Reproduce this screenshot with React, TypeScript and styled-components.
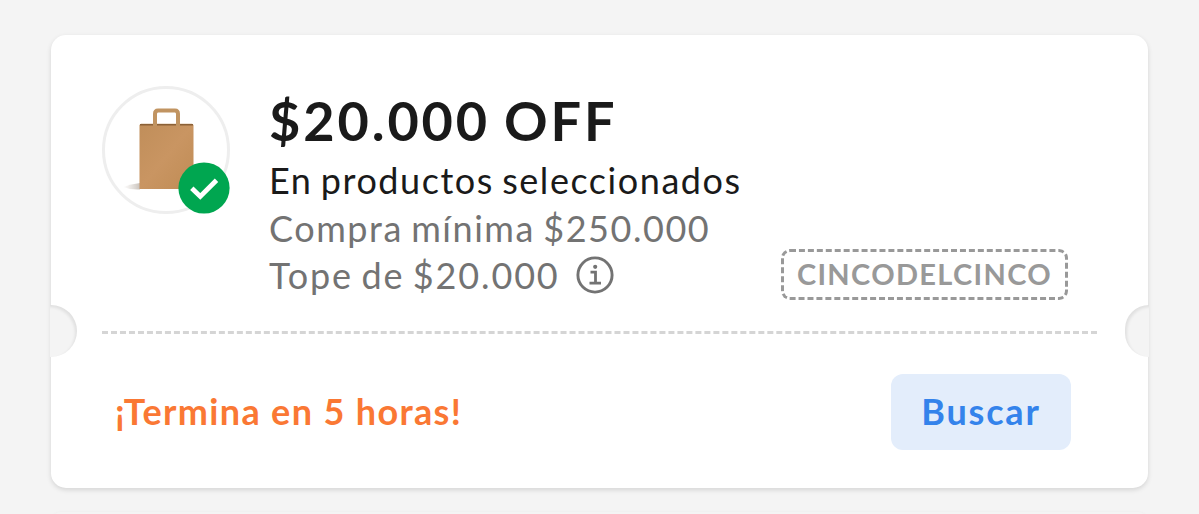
import styled, { createGlobalStyle } from 'styled-components'

const GlobalStyle = createGlobalStyle`
    body {
        margin: 0;
        background: #f4f4f4;
        font-family: Lato, 'Liberation Sans', sans-serif;
        overflow: hidden;
    }
`

const Page = styled.div`
    display: flex;
    flex-direction: column;
    gap: 24px;
    height: 514px;
    box-sizing: border-box;
    padding: 35px 51px 0;
    overflow: hidden;
`

const Card = styled.article`
    position: relative;
    display: flex;
    flex-direction: column;
    flex: none;
    height: 453px;
    border-radius: 15px;
    background: #fff;
    box-shadow: 0 2px 5px rgba(0, 0, 0, 0.13);
`

const NextCard = styled.div`
    flex: none;
    height: 20px;
    border-radius: 15px;
    box-shadow: 0 0 3px rgba(0, 0, 0, 0.04);
`

const Summary = styled.section`
    display: flex;
    height: 296px;
    box-sizing: border-box;
    padding: 51px 80px 0 51px;
`

const Picture = styled.div`
    position: relative;
    flex: none;
    width: 128px;
    height: 128px;
    margin-right: 39px;
    box-sizing: border-box;
    border: 3px solid #eee;
    border-radius: 50%;
`

const BagIcon = styled.svg`
    display: block;
    width: 122px;
    height: 122px;
`

const Badge = styled.svg`
    position: absolute;
    right: -3px;
    bottom: -3px;
    width: 52px;
    height: 52px;
`

const Details = styled.div`
    flex: 1;
    padding-top: 3px;
    white-space: nowrap;
`

const Title = styled.h1`
    margin: 0 0 4px;
    font-size: 54px;
    font-weight: 700;
    line-height: 64px;
    letter-spacing: 2.9px;
    word-spacing: -2px;
    color: #1a1a1a;
`

const Line = styled.p<{ $muted?: boolean, $spacing?: number }>`
    display: flex;
    align-items: center;
    margin: 0;
    font-size: 36px;
    line-height: 47.5px;
    letter-spacing: ${({ $spacing = 1.55 }) => $spacing}px;
    word-spacing: -2.5px;
    color: ${({ $muted }) => $muted ? '#737373' : '#1a1a1a'};
`

const InfoIcon = styled.svg`
    width: 38px;
    height: 38px;
    margin: 0 0 1px 16px;
`

const Code = styled.div`
    align-self: flex-end;
    flex: none;
    display: flex;
    align-items: center;
    justify-content: center;
    width: 287px;
    height: 51px;
    box-sizing: border-box;
    margin-bottom: 31px;
    padding-bottom: 2px;
    border: 3px dashed #999;
    border-radius: 9px;
    font-size: 29px;
    font-weight: 700;
    letter-spacing: 1.35px;
    color: #999;
`

const Divider = styled.div`
    margin: 0 51px;
    border-top: 3px dashed #d5d5d5;
`

const Notch = styled.div<{ $side: 'left' | 'right' }>`
    position: absolute;
    top: 270px;
    ${({ $side }) => $side}: -1px;
    width: ${({ $side }) => $side === 'left' ? 27 : 24}px;
    height: 52px;
    border-radius: ${({ $side }) => $side === 'left' ? '0 26px 26px 0' : '26px 0 0 26px'};
    background: #f4f4f4;
    box-shadow: inset ${({ $side }) => $side === 'left' ? -2 : 2}px 2px 3px rgba(0, 0, 0, 0.08);
`

const Footer = styled.footer`
    display: flex;
    align-items: center;
    justify-content: space-between;
    height: 76px;
    padding: 40px 77px 0 64px;
`

const Deadline = styled.span`
    padding-bottom: 2px;
    font-size: 36px;
    font-weight: 700;
    letter-spacing: 1.35px;
    white-space: nowrap;
    color: #fa7834;
`

const Button = styled.button`
    width: 180px;
    height: 76px;
    padding: 0 0 2px;
    border: 0;
    border-radius: 12px;
    background: #e3edfb;
    font-family: inherit;
    font-size: 36px;
    font-weight: 700;
    letter-spacing: 1.8px;
    color: #3483eb;
`

const Bag = () => (
    <BagIcon viewBox='0 0 122 122'>
        <defs>
            <linearGradient id='paper' x1='0' y1='0' x2='1' y2='1'>
                <stop offset='0' stopColor='#c08e5a' />
                <stop offset='0.5' stopColor='#c99562' />
                <stop offset='1' stopColor='#c08c55' />
            </linearGradient>
            <linearGradient id='shade' x1='0' y1='0' x2='1' y2='0'>
                <stop offset='0' stopColor='#998877' stopOpacity='0' />
                <stop offset='1' stopColor='#776655' stopOpacity='0.4' />
            </linearGradient>
        </defs>
        <path d='M18 98 Q26 95 35 94 V100.5 Q26 101 18 98Z' fill='url(#shade)' />
        <path d='M34.5 36 L36 34.8 H87 L88.5 36 V100 H34.5Z' fill='url(#paper)' />
        <path d='M35 35.8 H88' stroke='#8b6137' strokeWidth='1.5' />
        <path d='M50 37 V25 Q50 21.5 53 21.5 H70 Q73 21.5 73 25 V37' fill='none' stroke='#c19461' strokeWidth='4' />
    </BagIcon>
)

const Check = () => (
    <Badge viewBox='0 0 52 52'>
        <circle cx='26' cy='26' r='25.6' fill='#00a650' />
        <path d='M13.8 26.2 L22.3 34.5 L38.5 18.3' fill='none' stroke='#fff' strokeWidth='4.8' />
    </Badge>
)

const Info = () => (
    <InfoIcon viewBox='0 0 38 38' fill='none' stroke='#737373'>
        <circle cx='19' cy='19' r='17.1' strokeWidth='2.9' />
        <circle cx='19.2' cy='10.8' r='2.1' fill='#737373' stroke='none' />
        <path d='M14.5 16.2 H19.5 V27 M13.5 27.2 H25' strokeWidth='2.8' />
    </InfoIcon>
)

export default function App() {
    return (
        <>
            <GlobalStyle />
            <Page>
                <Card>
                    <Summary>
                        <Picture>
                            <Bag />
                            <Check />
                        </Picture>
                        <Details>
                            <Title>$20.000 OFF</Title>
                            <Line>En productos seleccionados</Line>
                            <Line $muted>Compra mínima $250.000</Line>
                            <Line $muted $spacing={1.85}>Tope de $20.000 <Info /></Line>
                        </Details>
                        <Code>CINCODELCINCO</Code>
                    </Summary>
                    <Divider />
                    <Footer>
                        <Deadline>¡Termina en 5 horas!</Deadline>
                        <Button>Buscar</Button>
                    </Footer>
                    <Notch $side='left' />
                    <Notch $side='right' />
                </Card>
                <NextCard />
            </Page>
        </>
    )
}
